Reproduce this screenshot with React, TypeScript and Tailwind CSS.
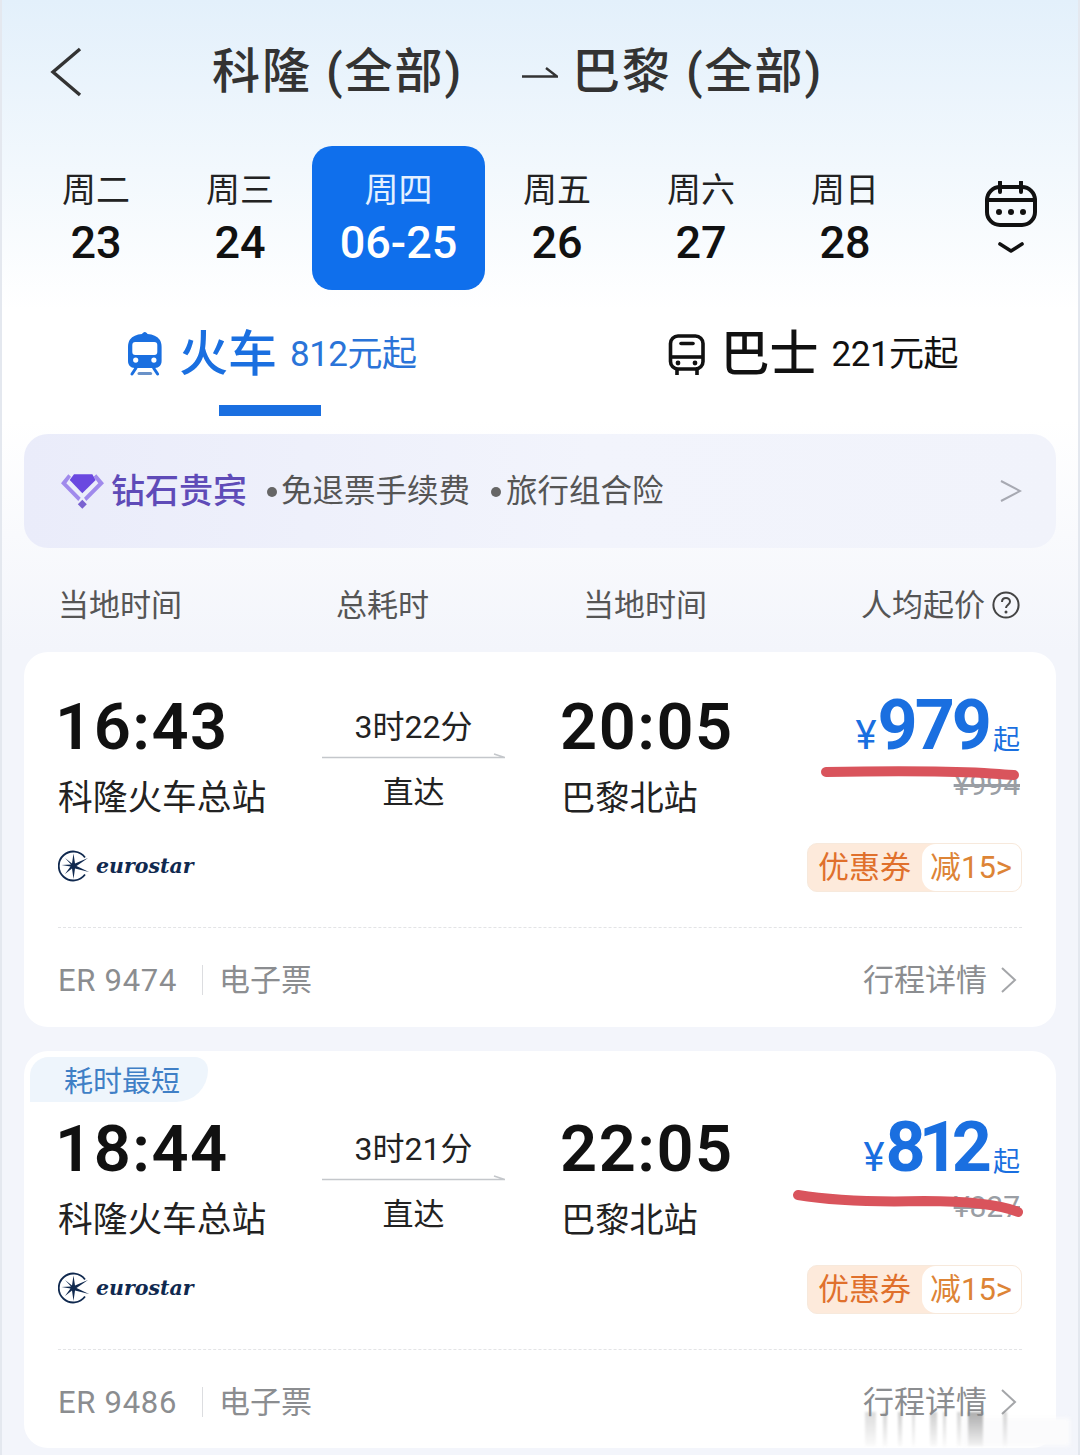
import React from 'react';

const cjk = "font-['Roboto','Noto_Sans_CJK_SC',sans-serif]";

const days = [
  { week: '周二', day: '23' },
  { week: '周三', day: '24' },
  { week: '周四', day: '06-25', active: true },
  { week: '周五', day: '26' },
  { week: '周六', day: '27' },
  { week: '周日', day: '28' },
];

// vertical smears of the watermark under 行程详情, offsets from x=862
const smears = [
  { left: 3, width: 11, alpha: 0.25 },
  { left: 21, width: 4, alpha: 0.3 },
  { left: 36, width: 4, alpha: 0.35 },
  { left: 50, width: 3, alpha: 0.25 },
  { left: 68, width: 7, alpha: 0.35 },
  { left: 81, width: 3, alpha: 0.3 },
  { left: 95, width: 4, alpha: 0.3 },
  { left: 106, width: 15, alpha: 0.6 },
  { left: 141, width: 4, alpha: 0.3 },
];

const EurostarLogo: React.FC = () => (
  <div className="flex items-center gap-[6px] pb-[3px]">
    <svg width="32" height="32" viewBox="0 0 32 32" fill="none">
      <path d="M27 7.5A14.5 14.5 0 1 0 27 24.5" stroke="#10294f" strokeWidth="1.8" />
      <path
        d="M15.5 3.5 17 13.5 30 8 18.5 16 31 22 17 18.5 15.5 29 14 18.5 7 24 12.5 16.5 3.5 15 13 14.5 7 8 14 13.5Z"
        fill="#10294f"
      />
    </svg>
    <span className="font-['DejaVu_Serif',serif] text-[20.5px] font-bold italic leading-none text-[#10294f]">
      eurostar
    </span>
  </div>
);

interface TrainCardProps {
  height: string;
  topPad: string;
  tag?: string;
  depart: string;
  duration: string;
  arrive: string;
  price: string;
  priceClass: string;
  oldPrice: string;
  trainNo: string;
  stroke: string;
}

const TrainCard: React.FC<TrainCardProps> = ({ height, topPad, tag, depart, duration, arrive, price, priceClass, oldPrice, trainNo, stroke }) => (
  <div className={`relative mx-6 shrink-0 rounded-[24px] bg-white px-[34px] ${height} ${topPad}`}>
    {tag && (
      <div className="absolute left-[6px] top-[6px] flex h-[45px] w-[178px] items-center rounded-tl-[20px] rounded-br-[34px] rounded-tr-[14px] bg-[#eef5fc] pl-[34px] pt-[5px] text-[29px] leading-none text-[#3f7fc6]">
        {tag}
      </div>
    )}
    <div className="flex items-start">
      <div className="w-[264px]">
        <div className="-ml-[3px] h-[76px] text-[65px] font-semibold leading-[76px] tracking-[1.5px] text-[#111]">{depart}</div>
        <div className="mt-[9px] h-[48px] text-[34.7px] leading-[48px] text-[#222]">科隆火车总站</div>
      </div>
      <div className="flex w-[183px] flex-col items-center">
        <div className="h-[42px] pt-[17px] text-[32px] leading-[42px] text-[#222]">{duration}</div>
        <svg className="mt-[20px]" width="183" height="8" viewBox="0 0 183 8" fill="none">
          <path d="M0 6.5H183L172 3" stroke="#c4c7cb" strokeWidth="1.6" />
        </svg>
        <div className="mt-[12px] h-[44px] text-[31px] leading-[44px] text-[#222]">直达</div>
      </div>
      <div className="ml-[56px] w-[200px]">
        <div className="-ml-[1px] h-[76px] text-[65px] font-semibold leading-[76px] tracking-[1.5px] text-[#111]">{arrive}</div>
        <div className="mt-[9px] h-[48px] text-[34.2px] leading-[48px] text-[#222]">巴黎北站</div>
      </div>
      <div className="flex-1 pr-[2px]">
        <div className="flex h-[76px] items-baseline justify-end text-[#1a6fe0]">
          <span className="text-[40px] leading-[72px]">¥</span>
          <span className={`ml-[1px] text-[70px] font-bold leading-[72px] ${priceClass}`}>{price}</span>
          <span className="ml-[4px] text-[27px] leading-[72px]">起</span>
        </div>
        <div className="mt-[4px] text-right text-[30px] leading-[32px] text-[#9a9ea4] line-through">{oldPrice}</div>
      </div>
    </div>
    <div className="mt-[21px] flex h-[49px] items-center justify-between">
      <EurostarLogo />
      <div className="flex h-[49px] w-[215px] items-center rounded-[10px] border border-[#f7e9dc] bg-[#fdeadb] pl-[10px] text-[31px] leading-none">
        <span className="w-[104px] text-[#e0702c]">优惠券</span>
        <span className="flex h-[47px] flex-1 items-center rounded-l-[14px] rounded-r-[9px] bg-white pl-[8px] text-[#dd8436]">减15&gt;</span>
      </div>
    </div>
    <div className="mt-[35px] border-t border-dashed border-[#e3e4e6]" />
    <div className="flex h-[98px] items-center justify-between pr-[5px] pt-[6px] text-[31px] leading-none text-[#8b8d90]">
      <div className="flex items-center">
        <span className="w-[144px] tracking-[0.7px]">{trainNo}</span>
        <span className="h-[30px] w-px bg-[#dcdde0]" />
        <span className="ml-[16px]">电子票</span>
      </div>
      <div className="flex items-center gap-[13px]">
        <span>行程详情</span>
        <svg width="17" height="28" viewBox="0 0 17 28" fill="none">
          <path d="M2 2 15 14 2 26" stroke="#a4a6a9" strokeWidth="2" />
        </svg>
      </div>
    </div>
    <svg className="pointer-events-none absolute inset-0" width="1032" height="375" viewBox="0 0 1032 375" fill="none">
      <path d={stroke} stroke="#d9545c" strokeWidth="10" strokeLinecap="round" />
    </svg>
  </div>
);

const App: React.FC = () => {
  return (
    <div className={`relative flex h-[1455px] w-[1080px] flex-col overflow-hidden bg-[linear-gradient(180deg,#e3f0fb_0px,#f2f8fd_170px,#ffffff_310px,#ffffff_420px,#f3f5fb_650px)] ${cjk}`}>
      {/* header */}
      <div className="flex h-[146px] shrink-0 items-center pb-[2px] text-[48px] leading-none text-[#333]">
        <svg className="ml-[50px] shrink-0" width="32" height="50" viewBox="0 0 32 50" fill="none">
          <path d="M30 2 3 25 30 48" stroke="#333" strokeWidth="3.4" />
        </svg>
        <span className="ml-[130px] w-[310px] font-medium tracking-[2px]">科隆 (全部)</span>
        <svg className="shrink-0" width="36" height="12" viewBox="0 0 36 12" fill="none">
          <path d="M0 10.5H35L24 2" stroke="#333" strokeWidth="2.4" />
        </svg>
        <span className="ml-[14px] font-medium tracking-[2px]">巴黎 (全部)</span>
      </div>

      {/* date strip */}
      <div className="flex h-[144px] shrink-0 items-stretch pl-6">
        {days.map((d) =>
          d.active ? (
            <div key={d.day} className="flex w-[173px] flex-col items-center rounded-[20px] bg-[#0f6fec] pt-[21px] text-white">
              <span className="text-[34px] leading-[46px] text-[#e4f0ff]">{d.week}</span>
              <span className="mt-[3px] text-[45px] font-medium leading-[54px]">{d.day}</span>
            </div>
          ) : (
            <div key={d.day} className="flex w-[144px] flex-col items-center pt-[21px] text-[#111]">
              <span className="text-[34px] leading-[46px] text-[#222]">{d.week}</span>
              <span className="mt-[3px] text-[45px] font-medium leading-[54px]">{d.day}</span>
            </div>
          ),
        )}
        <div className="ml-[68px] flex flex-col items-center pt-[35px]">
          <svg width="52" height="46" viewBox="0 0 52 46" fill="none">
            <rect x="2" y="6" width="48" height="38" rx="13" stroke="#111" strokeWidth="4" />
            <path d="M2 19H50M15 1V11M36 1V11" stroke="#111" strokeWidth="4" strokeLinecap="round" />
            <circle cx="14" cy="31" r="3" fill="#111" />
            <circle cx="26" cy="31" r="3" fill="#111" />
            <circle cx="38" cy="31" r="3" fill="#111" />
          </svg>
          <svg className="mt-[15px]" width="26" height="11" viewBox="0 0 26 11" fill="none">
            <path d="M2 2 13 9 24 2" stroke="#111" strokeWidth="3.6" strokeLinecap="round" strokeLinejoin="round" />
          </svg>
        </div>
      </div>

      {/* tabs */}
      <div className="relative h-[144px] shrink-0">
        <div className="flex h-[128px] items-center">
          <div className="ml-[126px] flex items-center text-[#1a6fe0]">
            <svg width="38" height="46" viewBox="0 0 38 46" fill="none">
              <path
                fillRule="evenodd"
                d="M18.8 1C20 1 21 2 21.5 3C27 3.5 31 5 33.5 8.5C35 10.5 35.6 13 35.6 16V30C35.6 34 33 37 29 37H8.6C4.6 37 2 34 2 30V16C2 13 2.6 10.5 4 8.5C6.5 5 10.6 3.5 16 3C16.6 2 17.6 1 18.8 1ZM9.3 11A3 3 0 0 0 6.3 14V21A3 3 0 0 0 9.3 24H28.3A3 3 0 0 0 31.3 21V14A3 3 0 0 0 28.3 11ZM9.7 26.5A2.6 2.6 0 1 0 9.7 31.7 2.6 2.6 0 1 0 9.7 26.5ZM27.9 26.5A2.6 2.6 0 1 0 27.9 31.7 2.6 2.6 0 1 0 27.9 26.5Z"
                fill="#1a6fe0"
              />
              <path d="M10 37 6 43M27.6 37 31.6 43" stroke="#1a6fe0" strokeWidth="3" strokeLinecap="round" />
              <path d="M13 42.5H24.6" stroke="#6a92c8" strokeWidth="3" strokeLinecap="round" />
            </svg>
            <span className="ml-[15px] text-[49px] font-medium leading-none">火车</span>
            <span className="ml-[13px] text-[35px] leading-none tracking-[-0.5px] text-[#2a74d8]">812元起</span>
          </div>
          <div className="ml-[251px] flex items-center text-[#111]">
            <svg width="38" height="46" viewBox="0 0 38 46" fill="none">
              <rect x="2.5" y="5" width="32.5" height="33" rx="7.5" stroke="#111" strokeWidth="3.6" />
              <path d="M3 26H34" stroke="#111" strokeWidth="3.6" />
              <path d="M13 12.5H25" stroke="#111" strokeWidth="3.6" strokeLinecap="round" />
              <circle cx="10" cy="32" r="2.4" fill="#111" />
              <circle cx="27" cy="32" r="2.4" fill="#111" />
              <path d="M9 38V44M29 38V44" stroke="#111" strokeWidth="3.6" />
            </svg>
            <span className="ml-[15px] text-[49px] font-medium leading-none">巴士</span>
            <span className="ml-[13px] text-[35px] leading-none tracking-[-0.5px]">221元起</span>
          </div>
        </div>
        <div className="ml-[219px] h-[11px] w-[102px] -translate-y-[13px] bg-[#1a6fe0]" />
      </div>

      {/* member banner */}
      <div className="mx-6 flex h-[114px] shrink-0 items-center rounded-[24px] bg-[linear-gradient(90deg,#eaecfa,#f2f4fc_55%,#f1f3fb)] pl-[37px] pr-[34px]">
        <svg width="44" height="37" viewBox="0 0 44 37" fill="none">
          <path d="M13 1.3H31.3L34.7 7 21.3 20.3 8.7 7Z" fill="#6a48e0" />
          <path d="M7.3 1.3 0 10.3 17.3 28 19.7 24.7 5.3 10.3 10 3.7Z" fill="#a08aec" />
          <path d="M35.3 1.3 43 10.3 25.3 28 23 24.7 37.3 10.3 32.6 3.7Z" fill="#a08aec" />
          <path d="M21.3 26.8 25.8 31.3 21.3 35.8 16.8 31.3Z" fill="#7a62d0" />
        </svg>
        <span className="ml-[6px] text-[34px] font-medium leading-none text-[#5f4bb8]">钻石贵宾</span>
        <span className="ml-[20px] flex items-center pt-[2px] text-[31.5px] leading-none text-[#555]">
          <span className="mr-[4px] size-[10px] rounded-full bg-[#666]" />
          免退票手续费
        </span>
        <span className="ml-[21px] flex items-center pt-[2px] text-[31.5px] leading-none text-[#555]">
          <span className="mr-[5px] size-[10px] rounded-full bg-[#666]" />
          旅行组合险
        </span>
        <svg className="ml-auto" width="22" height="24" viewBox="0 0 22 24" fill="none">
          <path d="M1 2 20 12 1 22" stroke="#a7a9b2" strokeWidth="2" />
        </svg>
      </div>

      {/* column labels */}
      <div className="flex h-[104px] shrink-0 items-center pl-[58px] pt-[10px] text-[31px] leading-none text-[#555]">
        <span className="w-[278px]">当地时间</span>
        <span className="w-[247px]">总耗时</span>
        <span className="w-[278px]">当地时间</span>
        <span>人均起价</span>
        <svg className="ml-[7px]" width="28" height="28" viewBox="0 0 28 28" fill="none">
          <circle cx="14" cy="14" r="12.6" stroke="#444" strokeWidth="2" />
          <path d="M10 11C10 8.5 11.8 7 14 7S18 8.5 18 10.8C18 13.5 14 14 14 17" stroke="#444" strokeWidth="2" />
          <circle cx="14" cy="21" r="1.5" fill="#444" />
        </svg>
      </div>

      <div className="flex flex-col gap-6">
        <TrainCard
          height="h-[375px]"
          topPad="pt-[37px]"
          depart="16:43"
          duration="3时22分"
          arrive="20:05"
          price="979"
          priceClass="tracking-[-3px]"
          oldPrice="¥994"
          trainNo="ER 9474"
          stroke="M802 120C860 119 920 119 960 121 975 122 985 123 990 123"
        />
        <TrainCard
          height="h-[397px]"
          topPad="pt-[60px]"
          tag="耗时最短"
          depart="18:44"
          duration="3时21分"
          arrive="22:05"
          price="812"
          priceClass="tracking-[-7px] mr-[4px]"
          oldPrice="¥827"
          trainNo="ER 9486"
          stroke="M774 144C810 150 860 151 900 150 945 150 975 153 994 161"
        />
      </div>

      {/* frame edge and watermark smear */}
      <div className="pointer-events-none absolute inset-0 border-x-2 border-[#e4e8ef]" />
      <div className="absolute left-[862px] top-[1412px] h-[34px] w-[208px]">
        <div className="absolute bottom-0 left-[100px] right-0 top-[6px] bg-[#fbfbfc] blur-[2px]" />
        {smears.map((s) => (
          <div
            key={s.left}
            className="absolute top-0 h-full bg-[linear-gradient(180deg,#777,#eeeeee)] blur-[1px]"
            style={{ left: s.left, width: s.width, opacity: s.alpha }}
          />
        ))}
      </div>
    </div>
  );
};

export default App;
